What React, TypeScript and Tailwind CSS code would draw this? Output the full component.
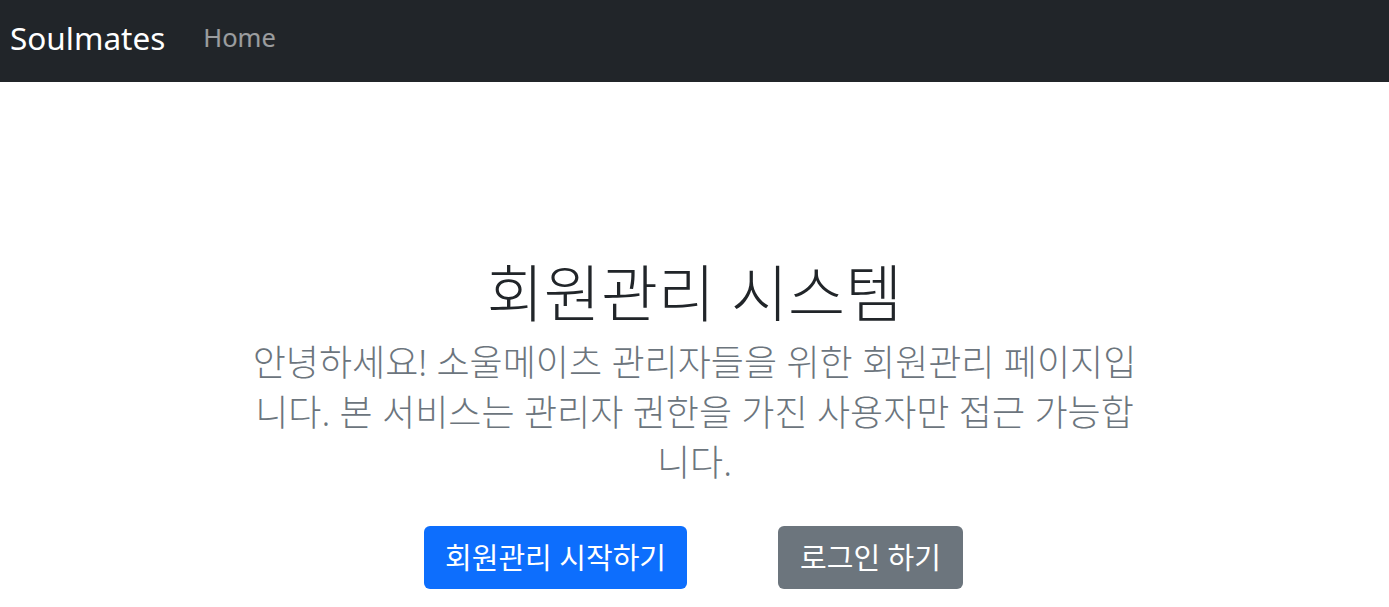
export default function App() {
  return (
    <div className="min-h-screen bg-white font-['Noto_Sans','Noto_Sans_CJK_KR',sans-serif]">
      <nav className="flex h-[82px] items-center bg-[#212529] px-[10px] pb-[6px]">
        <span className="text-[31.5px] leading-none text-white">Soulmates</span>
        <a href="#" className="ml-[38px] text-[25.5px] leading-none text-white/55">
          Home
        </a>
      </nav>
      <main className="flex flex-col items-center pt-[177px] text-center">
        <h1 className="text-[62px] font-light leading-[68px] text-[#212529]">회원관리 시스템</h1>
        <p className="mt-[11px] text-[36px] font-light leading-[50px] text-[#6c757d]">
          안녕하세요! 소울메이츠 관리자들을 위한 회원관리 페이지입
          <br />
          니다. 본 서비스는 관리자 권한을 가진 사용자만 접근 가능합
          <br />
          니다.
        </p>
        <div className="mt-[38px] flex gap-[91px] pr-[2px]">
          <button className="h-[63px] rounded-[6px] bg-[#0d6efd] px-[21px] text-[29px] text-white">
            회원관리 시작하기
          </button>
          <button className="h-[63px] rounded-[6px] bg-[#6c757d] px-[22px] text-[29px] text-white">
            로그인 하기
          </button>
        </div>
      </main>
    </div>
  );
}
